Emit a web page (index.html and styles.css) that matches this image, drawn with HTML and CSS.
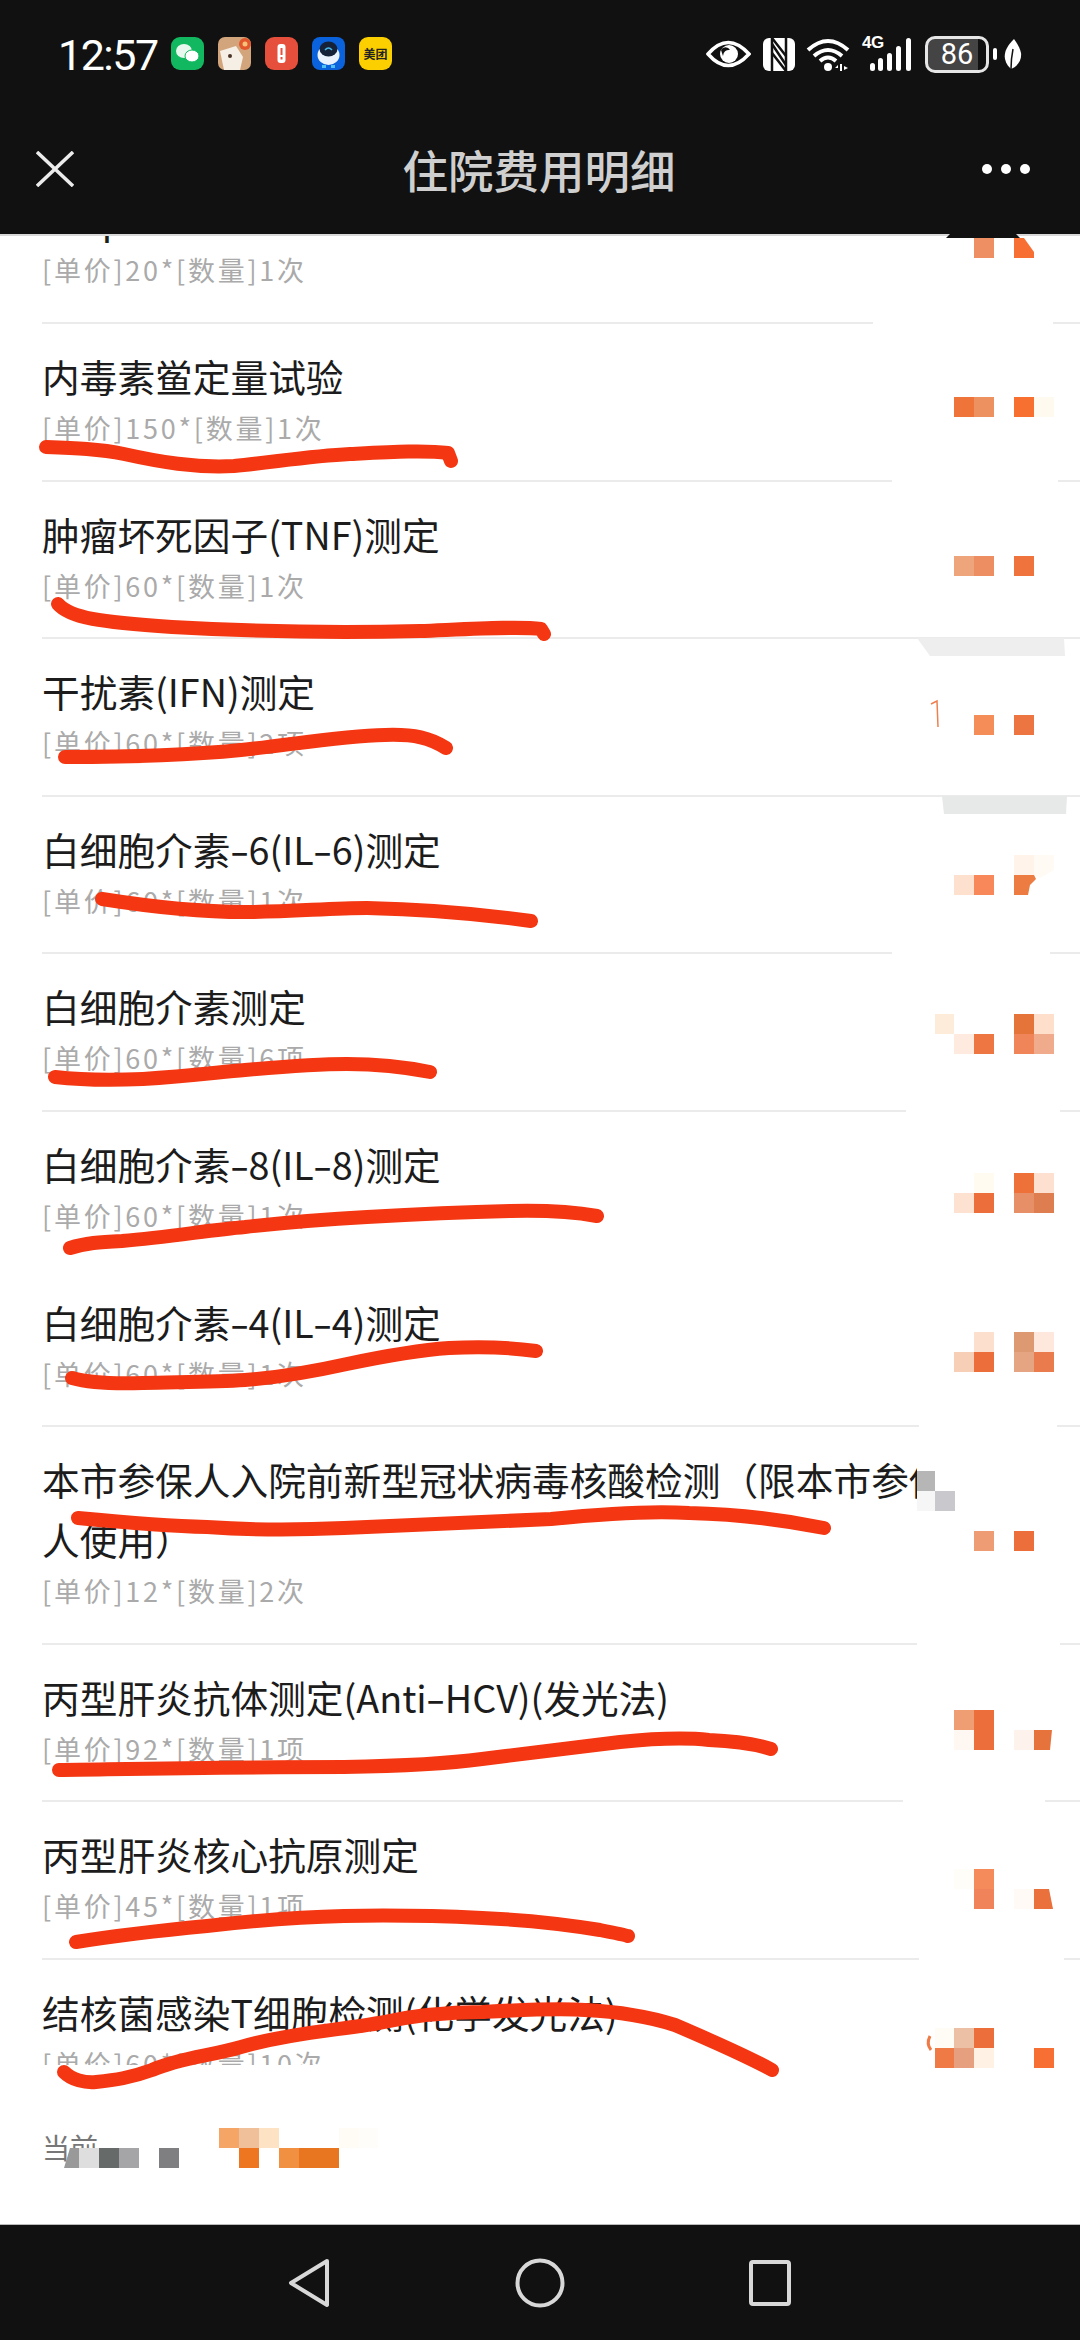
FILE: index.html
```html
<!DOCTYPE html>
<html lang="zh-CN">

<head>
    <meta charset="UTF-8">
    <title>住院费用明细</title>
    <link rel="stylesheet" href="styles.css">
</head>

<body>
    <header class="top">
        <div class="status-bar">
            <span class="time">12:57</span>
            <div class="app-icons">
                <svg class="app" viewBox="0 0 33 33">
                    <rect width="33" height="33" rx="9" fill="#12b85f" />
                    <ellipse cx="13" cy="14" rx="8" ry="7" fill="#e9f8ee" />
                    <ellipse cx="21" cy="19" rx="7" ry="6" fill="#fff" stroke="#12b85f" />
                </svg>
                <svg class="app" viewBox="0 0 33 33">
                    <rect width="33" height="33" rx="7" fill="#d3a57c" />
                    <path d="M2 14 L18 9 L25 20 L22 33 H6 Z" fill="#f6efe6" />
                    <circle cx="27" cy="7" r="6" fill="#e2572c" />
                    <circle cx="27" cy="7" r="2.5" fill="#f6c27a" />
                    <circle cx="12" cy="19" r="2" fill="#4a3428" />
                </svg>
                <svg class="app" viewBox="0 0 33 33">
                    <rect width="33" height="33" rx="9" fill="#e54f3c" />
                    <rect x="12.500" y="7" width="8" height="19" rx="3" fill="#fff" />
                    <rect x="15.500" y="11" width="2" height="7" fill="#e54f3c" />
                    <rect x="15.500" y="20" width="2" height="2.500" fill="#e54f3c" />
                </svg>
                <svg class="app" viewBox="0 0 33 33">
                    <rect width="33" height="33" rx="8" fill="#0a62dc" />
                    <ellipse cx="16.500" cy="18" rx="11" ry="10" fill="#eaf3fd" />
                    <ellipse cx="16.500" cy="12" rx="9" ry="7.500" fill="#152238" />
                    <path d="M13 13 Q16.500 9 20 13" fill="none" stroke="#46b6e8" stroke-width="1.500" />
                    <rect x="10" y="28" width="4" height="3" fill="#4fc0f0" />
                    <rect x="19" y="28" width="4" height="3" fill="#4fc0f0" />
                </svg>
                <div class="app app-meituan">美团</div>
            </div>
            <div class="sys-icons">
                <svg class="eye" viewBox="0 0 45 30">
                    <path d="M2 15 Q22 -8 43 15 Q22 38 2 15 Z" fill="none" stroke="#fff" stroke-width="3.500" />
                    <circle cx="23" cy="15" r="9" fill="#fff" />
                    <path d="M15 11 A5 5 0 0 1 24 11 A6 6 0 0 0 17 17 Z" fill="#111" />
                </svg>
                <svg class="nfc" viewBox="0 0 32 33">
                    <rect x="0" y="0" width="32" height="33" rx="6" fill="#fff" />
                    <path d="M9 0 V33 M23 0 V33" stroke="#111" stroke-width="2.500" />
                    <path d="M9 6 L23 27 M9 15 L23 33 M9 0 L23 18" stroke="#111" stroke-width="2.500" />
                </svg>
                <svg class="wifi" viewBox="0 0 44 33">
                    <g fill="none" stroke="#fff" stroke-width="4">
                        <path d="M2 12 Q22 -6 42 12" />
                        <path d="M8 18 Q22 6 36 18" />
                        <path d="M14 23 Q22 16 30 23" />
                    </g>
                    <circle cx="22" cy="29" r="4" fill="#fff" />
                    <path d="M32 27 L29 30 H32 Z M34 26 H36 V33 H34 Z M38 28 L42 30 L38 32 Z" fill="#fff" />
                </svg>
                <div class="signal">
                    <span class="net">4G</span>
                    <svg class="bars" viewBox="0 0 51 33">
                        <rect x="8" y="25" width="5" height="8" rx="2.500" fill="#fff" />
                        <rect x="16" y="20" width="5" height="13" rx="2.500" fill="#fff" />
                        <rect x="25" y="15" width="5" height="18" rx="2.500" fill="#fff" />
                        <rect x="34" y="8" width="5" height="25" rx="2.500" fill="#fff" />
                        <rect x="44" y="0" width="5" height="33" rx="2.500" fill="#fff" />
                    </svg>
                </div>
                <div class="battery">
                    <div class="battery-body">86</div>
                    <span class="battery-nub"></span>
                </div>
                <svg class="leaf" viewBox="0 0 18 30">
                    <path d="M10 0 C2 8 0 14 1 20 C2 25 5 28 7 30 C14 27 18 21 17 14 C16 9 13 4 10 0 Z" fill="#fff" />
                    <path d="M9 10 Q7 20 7 30" stroke="#111" stroke-width="1.500" fill="none" />
                </svg>
            </div>
        </div>
        <div class="nav-bar">
            <svg class="close" viewBox="0 0 38 36">
                <path d="M1 1 L37 35 M37 1 L1 35" stroke="#ececec" stroke-width="3.500" />
            </svg>
            <h1 class="nav-title">住院费用明细</h1>
            <div class="more"><span></span><span></span><span></span></div>
        </div>
    </header>

    <main class="content">
        <ul class="fee-list">
            <li class="fee-row">
                <p class="fee-name">NT-proBNP</p>
                <p class="fee-detail">[单价]20*[数量]1次</p>
            </li>
            <li class="fee-row">
                <p class="fee-name">内毒素鲎定量试验</p>
                <p class="fee-detail">[单价]150*[数量]1次</p>
            </li>
            <li class="fee-row">
                <p class="fee-name">肿瘤坏死因子(TNF)测定</p>
                <p class="fee-detail">[单价]60*[数量]1次</p>
            </li>
            <li class="fee-row">
                <p class="fee-name">干扰素(IFN)测定</p>
                <p class="fee-detail">[单价]60*[数量]2项</p>
            </li>
            <li class="fee-row">
                <p class="fee-name">白细胞介素<span class="dash">-</span>6(IL<span class="dash">-</span>6)测定</p>
                <p class="fee-detail">[单价]60*[数量]1次</p>
            </li>
            <li class="fee-row">
                <p class="fee-name">白细胞介素测定</p>
                <p class="fee-detail">[单价]60*[数量]6项</p>
            </li>
            <li class="fee-row">
                <p class="fee-name">白细胞介素<span class="dash">-</span>8(IL<span class="dash">-</span>8)测定</p>
                <p class="fee-detail">[单价]60*[数量]1次</p>
            </li>
            <li class="fee-row">
                <p class="fee-name">白细胞介素<span class="dash">-</span>4(IL<span class="dash">-</span>4)测定</p>
                <p class="fee-detail">[单价]60*[数量]1次</p>
            </li>
            <li class="fee-row">
                <p class="fee-name">本市参保人入院前新型冠状病毒核酸检测（限本市参保人使用）</p>
                <p class="fee-detail">[单价]12*[数量]2次</p>
            </li>
            <li class="fee-row">
                <p class="fee-name">丙型肝炎抗体测定(Anti<span class="dash">-</span>HCV)(发光法)</p>
                <p class="fee-detail">[单价]92*[数量]1项</p>
            </li>
            <li class="fee-row">
                <p class="fee-name">丙型肝炎核心抗原测定</p>
                <p class="fee-detail">[单价]45*[数量]1项</p>
            </li>
            <li class="fee-row">
                <p class="fee-name">结核菌感染T细胞检测(化学发光法)</p>
                <p class="fee-detail">[单价]60*[数量]10次</p>
            </li>
        </ul>
        <div class="total">当前</div>
    </main>

    <footer class="sys-nav">
        <svg class="nav-icon" viewBox="0 0 42 50">
            <path d="M39 3 L3 25 L39 47 Z" fill="none" stroke="#d8d8d8" stroke-width="4" stroke-linejoin="round" />
        </svg>
        <svg class="nav-icon" viewBox="0 0 50 50">
            <circle cx="25" cy="25" r="22.500" fill="none" stroke="#d8d8d8" stroke-width="4" />
        </svg>
        <svg class="nav-icon nav-square" viewBox="0 0 42 46">
            <rect x="2" y="2" width="38" height="42" rx="2" fill="none" stroke="#d8d8d8" stroke-width="4" />
        </svg>
    </footer>

    <!-- 打码和红笔涂改，盖在页面上面 -->
    <svg class="marks" viewBox="0 0 1080 2340">
        <!-- 擦掉的分割线 -->
        <g fill="#fff">
            <rect x="873" y="318" width="180" height="8" />
            <rect x="892" y="476" width="166" height="8" />
            <rect x="892" y="949" width="158" height="8" />
            <rect x="906" y="1106" width="154" height="8" />
            <rect x="42" y="1264" width="1038" height="8" />
            <rect x="919" y="1422" width="138" height="8" />
            <rect x="917" y="1640" width="143" height="8" />
            <rect x="903" y="1797" width="142" height="8" />
            <rect x="919" y="1955" width="145" height="8" />
            <rect x="917" y="1450" width="60" height="62" />
        </g>
        <polygon points="917,638 1064,638 1065,656 930,656" fill="#eeeeee" />
        <polygon points="942,796 1067,796 1066,814 944,814" fill="#e6e9e7" />
        <polygon points="946,238 950,234 1016,234 1020,238" fill="#111" />

        <!-- 金额马赛克 -->
        <rect x="974" y="238" width="20" height="20" fill="#ee8f63" />
        <polygon points="1014,238 1024,238 1034,252 1034,258 1014,258" fill="#f86f33" />
        <rect x="1014" y="397" width="20" height="20" fill="#f8702f" />
        <rect x="954" y="397" width="20" height="20" fill="#ef7439" />
        <rect x="974" y="397" width="20" height="20" fill="#ed9161" />
        <rect x="1034" y="397" width="20" height="20" fill="#fffaf0" />
        <rect x="954" y="556" width="20" height="20" fill="#efa57c" />
        <rect x="974" y="556" width="20" height="20" fill="#ed8e62" />
        <rect x="1014" y="556" width="20" height="20" fill="#ee733c" />
        <path d="M931 704 L937 701 L938 727" fill="none" stroke="#ee8050" stroke-width="1.500" />
        <rect x="974" y="715" width="20" height="20" fill="#f48d58" />
        <rect x="1014" y="715" width="20" height="20" fill="#ec7542" />

        <rect x="1014" y="855" width="20" height="20" fill="#fff3ea" />
        <polygon points="1034,855 1054,855 1054,870 1040,878 1034,875" fill="#fffaf4" />
        <rect x="954" y="875" width="20" height="20" fill="#fde0cd" />
        <rect x="974" y="875" width="20" height="20" fill="#f8875a" />
        <polygon points="1014,875 1034,875 1036,879 1030,885 1028,895 1014,895" fill="#ec7c42" />

        <rect x="935" y="1014" width="19" height="20" fill="#fdecd9" />
        <rect x="1014" y="1014" width="20" height="20" fill="#e5743a" />
        <rect x="1034" y="1014" width="20" height="20" fill="#fddfcc" />
        <rect x="954" y="1034" width="20" height="20" fill="#feeadf" />
        <rect x="974" y="1034" width="20" height="20" fill="#ee7642" />
        <rect x="1014" y="1034" width="20" height="20" fill="#ef8558" />
        <rect x="1034" y="1034" width="20" height="20" fill="#efab8b" />

        <rect x="974" y="1173" width="20" height="20" fill="#fffbf0" />
        <rect x="1014" y="1173" width="20" height="20" fill="#ef713a" />
        <rect x="1034" y="1173" width="20" height="20" fill="#fde0cf" />
        <rect x="954" y="1193" width="20" height="20" fill="#fde2d2" />
        <rect x="974" y="1193" width="20" height="20" fill="#ec6f3b" />
        <rect x="1014" y="1193" width="20" height="20" fill="#e79068" />
        <rect x="1034" y="1193" width="20" height="20" fill="#de7d50" />

        <rect x="974" y="1332" width="20" height="20" fill="#fddfcd" />
        <rect x="1014" y="1332" width="20" height="20" fill="#dd9a72" />
        <rect x="1034" y="1332" width="20" height="20" fill="#fee8de" />
        <rect x="954" y="1352" width="20" height="20" fill="#f6cfb6" />
        <rect x="974" y="1352" width="20" height="20" fill="#ec6f3b" />
        <rect x="1014" y="1352" width="20" height="20" fill="#e6a582" />
        <rect x="1034" y="1352" width="20" height="20" fill="#e97b4d" />

        <rect x="917" y="1471" width="18" height="20" fill="#b6b6b6" />
        <rect x="917" y="1491" width="18" height="20" fill="#f6f6f6" />
        <rect x="935" y="1491" width="20" height="20" fill="#c9c8cc" />
        <rect x="974" y="1531" width="20" height="20" fill="#ee9c74" />
        <rect x="1014" y="1531" width="20" height="20" fill="#ec6f3b" />

        <rect x="954" y="1710" width="20" height="20" fill="#ef9e74" />
        <rect x="974" y="1710" width="20" height="40" fill="#ec6f3b" />
        <rect x="954" y="1730" width="20" height="20" fill="#fff8f2" />
        <rect x="1014" y="1730" width="20" height="20" fill="#fef3ec" />
        <polygon points="1034,1730 1052,1730 1050,1750 1034,1750" fill="#e6733b" />

        <rect x="954" y="1869" width="20" height="20" fill="#fffdf8" />
        <rect x="974" y="1869" width="20" height="20" fill="#f58a5a" />
        <rect x="974" y="1889" width="20" height="20" fill="#f0835a" />
        <rect x="1014" y="1889" width="20" height="20" fill="#fffaf5" />
        <polygon points="1034,1889 1049,1889 1053,1909 1034,1909" fill="#ea703c" />

        <path d="M930 2036 Q926 2044 931 2050" fill="none" stroke="#ef7a45" stroke-width="3" />
        <rect x="935" y="2028" width="19" height="20" fill="#fffcf6" />
        <rect x="954" y="2028" width="20" height="20" fill="#ecc0a4" />
        <rect x="974" y="2028" width="20" height="20" fill="#ec6f3b" />
        <rect x="935" y="2048" width="19" height="20" fill="#ef7a45" />
        <rect x="954" y="2048" width="20" height="20" fill="#e6a07f" />
        <rect x="974" y="2048" width="20" height="20" fill="#fff1e4" />
        <rect x="1034" y="2048" width="20" height="20" fill="#f86f33" />

        <!-- 底部合计马赛克 -->
        <rect x="219" y="2128" width="20" height="20" fill="#f5a566" />
        <rect x="239" y="2128" width="20" height="20" fill="#f0c09a" />
        <rect x="259" y="2128" width="20" height="20" fill="#fde3c4" />
        <rect x="339" y="2128" width="20" height="20" fill="#fffcf5" />
        <rect x="359" y="2128" width="19" height="20" fill="#fffdf9" />
        <polygon points="70,2148 79,2148 79,2168 64,2168" fill="#999999" />
        <rect x="79" y="2148" width="20" height="20" fill="#dededf" />
        <rect x="99" y="2148" width="20" height="20" fill="#666a68" />
        <rect x="119" y="2148" width="20" height="20" fill="#a5a5a8" />
        <rect x="159" y="2148" width="20" height="20" fill="#7f7f82" />
        <rect x="239" y="2148" width="20" height="20" fill="#ee7620" />
        <rect x="279" y="2148" width="20" height="20" fill="#f09040" />
        <rect x="299" y="2148" width="40" height="20" fill="#e8751f" />

        <!-- 红笔 -->
        <g fill="none" stroke="#f43712" stroke-width="14" stroke-linecap="round" stroke-linejoin="round">
            <path d="M46 447 C75 448 100 449 124 454 C160 462 195 468 234 466 C275 462 310 456 350 454 C390 452 425 450 448 453 L451 461" />
            <path d="M58 604 C70 618 100 622 172 627 C260 632 340 633 420 631 C470 629 520 626 541 629 L544 634" />
            <path d="M65 757 C120 757 190 755 241 750 C290 745 340 736 385 735 C415 734 430 738 446 748" />
            <path d="M102 899 C140 905 190 912 245 912 C290 912 330 908 367 908 C420 909 480 914 531 921" />
            <path d="M55 1077 C90 1081 120 1080 143 1079 C190 1076 220 1072 245 1070 C290 1066 320 1064 347 1064 C385 1064 410 1068 430 1072" />
            <path d="M70 1248 C85 1243 100 1242 122 1241 C170 1237 210 1230 245 1227 C290 1222 330 1219 367 1217 C420 1214 470 1212 510 1211 C550 1210 580 1213 597 1216" />
            <path d="M72 1378 C90 1383 115 1384 143 1383 C180 1382 215 1382 245 1380 C285 1377 320 1370 347 1364 C385 1356 420 1350 449 1348 C490 1346 515 1348 536 1351" />
            <path d="M78 1518 C120 1522 165 1526 207 1527 C250 1530 300 1530 344 1528 C420 1525 490 1521 551 1519 C610 1513 660 1511 689 1513 C730 1514 775 1518 824 1528" />
            <path d="M59 1770 C130 1769 220 1767 344 1767 C400 1766 445 1764 482 1759 C530 1753 580 1747 620 1742 C660 1738 690 1738 709 1740 C735 1741 755 1744 771 1749" />
            <path d="M76 1942 C120 1935 165 1930 207 1926 C260 1920 300 1917 344 1916 C390 1915 440 1916 482 1918 C530 1920 570 1925 600 1930 C610 1932 625 1935 628 1936" />
            <path d="M64 2072 C72 2080 85 2083 96 2082 C115 2080 130 2078 152 2070 C180 2058 210 2056 241 2047 C290 2033 340 2030 379 2023 C415 2015 450 2012 482 2012 C520 2010 555 2008 585 2010 C625 2012 650 2017 675 2025 C710 2040 745 2055 772 2070" />
        </g>
    </svg>
</body>

</html>
```

FILE: styles.css
```css
* {
    box-sizing: border-box;
}

body {
    margin: 0;
    width: 1080px;
    height: 2340px;
    display: flex;
    flex-direction: column;
    position: relative;
    overflow: hidden;
    background-color: #fff;
    font-family: "Noto Sans CJK SC", "Noto Sans", sans-serif;
}

/* top */
.top {
    height: 236px;
    background-color: #111;
    border-bottom: 2px solid #d8d8d8;
    flex-shrink: 0;
}

.status-bar {
    height: 110px;
    padding: 35px 58px 0 58px;
    display: flex;
    align-items: flex-start;
}

.time {
    width: 113px;
    color: #fff;
    font-family: Roboto, sans-serif;
    font-size: 43px;
    line-height: 40px;
    letter-spacing: -1.5px;
}

.app-icons {
    display: flex;
    gap: 14px;
    padding-top: 2px;
}

.app {
    width: 33px;
    height: 33px;
    display: block;
}

.app-meituan {
    background-color: #fcd000;
    border-radius: 9px;
    color: #222;
    font-size: 12px;
    font-weight: 700;
    line-height: 33px;
    text-align: center;
}

.sys-icons {
    margin-left: auto;
    display: flex;
    align-items: center;
    height: 38px;
}

.eye {
    width: 45px;
    height: 30px;
    margin-right: 12px;
}

.nfc {
    width: 32px;
    height: 33px;
    margin-right: 11px;
}

.wifi {
    width: 44px;
    height: 33px;
    margin-right: 12px;
}

.signal {
    width: 51px;
    height: 33px;
    position: relative;
    margin-right: 12px;
}

.net {
    position: absolute;
    left: 0;
    top: -5px;
    color: #fff;
    font-family: "Liberation Sans", sans-serif;
    font-size: 17px;
    font-weight: 700;
    letter-spacing: -0.5px;
}

.bars {
    width: 51px;
    height: 33px;
    display: block;
}

.battery {
    display: flex;
    align-items: center;
}

.battery-body {
    width: 64px;
    height: 37px;
    border: 3px solid #e6e6e6;
    border-radius: 10px;
    background: linear-gradient(to right, #444 86%, #111 86%);
    color: #fff;
    font-family: Roboto, sans-serif;
    font-size: 29px;
    line-height: 31px;
    text-align: center;
}

.battery-nub {
    width: 4px;
    height: 12px;
    margin-left: 4px;
    background-color: #fff;
    border-radius: 2px;
}

.leaf {
    width: 18px;
    height: 30px;
    margin-left: 7px;
}

.nav-bar {
    height: 124px;
    padding: 0 50px 6px 36px;
    display: flex;
    align-items: center;
}

.close {
    width: 38px;
    height: 36px;
}

.nav-title {
    flex: 1;
    margin: 0 0 0 22px;
    color: #cfcfcf;
    font-size: 45.500px;
    font-weight: 500;
    line-height: 60px;
    text-align: center;
}

.more {
    width: 48px;
    display: flex;
    gap: 9px;
}

.more span {
    width: 10px;
    height: 10px;
    border-radius: 50%;
    background-color: #fff;
}

/* list */
.content {
    flex: 1;
    min-height: 0;
    display: flex;
    flex-direction: column;
}

.fee-list {
    margin: 0;
    padding: 0;
    list-style: none;
    height: 1829px;
    overflow: hidden;
}

.fee-row {
    margin-left: 42px;
    padding: 22px 0 29.600px;
    border-bottom: 2px solid #ebebeb;
}

.fee-row:first-child {
    margin-top: -69.600px;
}

.fee-name {
    margin: 0;
    width: 910px;
    color: #1c1c1c;
    font-size: 37.700px;
    line-height: 60px;
}

.dash {
    display: inline-block;
    margin: 0 2.500px;
    transform: scaleX(1.500);
}

.fee-detail {
    margin: 0;
    color: #aaa;
    font-size: 27px;
    line-height: 44px;
    letter-spacing: 2.750px;
}

.total {
    padding: 60px 0 0 42px;
    color: #777;
    font-size: 28px;
    line-height: 44px;
}

/* bottom */
.sys-nav {
    height: 116px;
    flex-shrink: 0;
    position: relative;
    background-color: #111;
    border-top: 1px solid #bbb;
    padding: 0 289px 0 288px;
    display: flex;
    align-items: center;
    justify-content: space-between;
}

.nav-icon {
    height: 50px;
}

.nav-square {
    height: 46px;
}

/* overlay */
.marks {
    position: absolute;
    left: 0;
    top: 0;
    width: 1080px;
    height: 2340px;
    pointer-events: none;
}
```
